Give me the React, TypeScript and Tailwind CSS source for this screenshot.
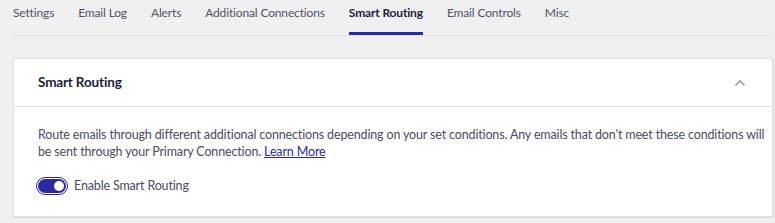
import { useState } from 'react';

const TABS = ['Settings', 'Email Log', 'Alerts', 'Additional Connections', 'Smart Routing', 'Email Controls', 'Misc'];

export default function App() {
  const [on, setOn] = useState(true);
  const active = 'Smart Routing';

  return (
    <div className="min-h-[223px] bg-[#f0f0f1] pl-[13px] pr-[2px] font-['Lato',sans-serif] text-[12.5px] tracking-[-0.15px]">
      <nav className="flex gap-[24px] border-b border-[#e2e2e4] text-[12px]">
        {TABS.map((t) => (
          <button
            key={t}
            className={`h-[35px] pb-[6px] border-b-[3px] leading-none ${t === active ? 'border-[#2a2aa8] font-bold text-[#1d1d3a]' : 'border-transparent text-[#50506a]'}`}
          >
            {t}
          </button>
        ))}
      </nav>

      <section className="mt-[22px] bg-white border border-[#e2e2e4] shadow-[1px_1px_0_#dcdcde]">
        <header className="flex items-center justify-between h-[48px] px-[24px] border-b border-[#e2e2e4]">
          <h2 className="text-[13.5px] font-bold text-[#1d1d3a]">Smart Routing</h2>
          <svg width="12" height="8" viewBox="0 0 12 8" className="mr-[2px]">
            <path d="M1.5 6.5 L6 2 L10.5 6.5" fill="none" stroke="#9a9aaa" strokeWidth="1.6" />
          </svg>
        </header>
        <div className="pl-[24px] pr-[6px] pt-[19px] pb-[20px]">
          <p className="leading-[17px] text-[#4b4b63]">
            Route emails through different additional connections depending on your set conditions. Any emails that don't meet these conditions will be sent through your Primary Connection.{' '}
            <a href="#" className="text-[#2a2aa8] underline">Learn More</a>
          </p>
          <label className="mt-[17px] flex items-center gap-[6px] cursor-pointer">
            <button
              onClick={() => setOn(!on)}
              className="w-[32px] h-[18px] -ml-[2px] rounded-full border border-[#2a2aa8] p-[1px] bg-white"
            >
              <span className={`flex h-full w-full items-center rounded-full px-[2px] ${on ? 'bg-[#2a2aa8] justify-end' : 'bg-[#c3c4c7] justify-start'}`}>
                <span className="h-[10px] w-[10px] rounded-full bg-white" />
              </span>
            </button>
            <span className="text-[#4b4b63]">Enable Smart Routing</span>
          </label>
        </div>
      </section>
    </div>
  );
}
